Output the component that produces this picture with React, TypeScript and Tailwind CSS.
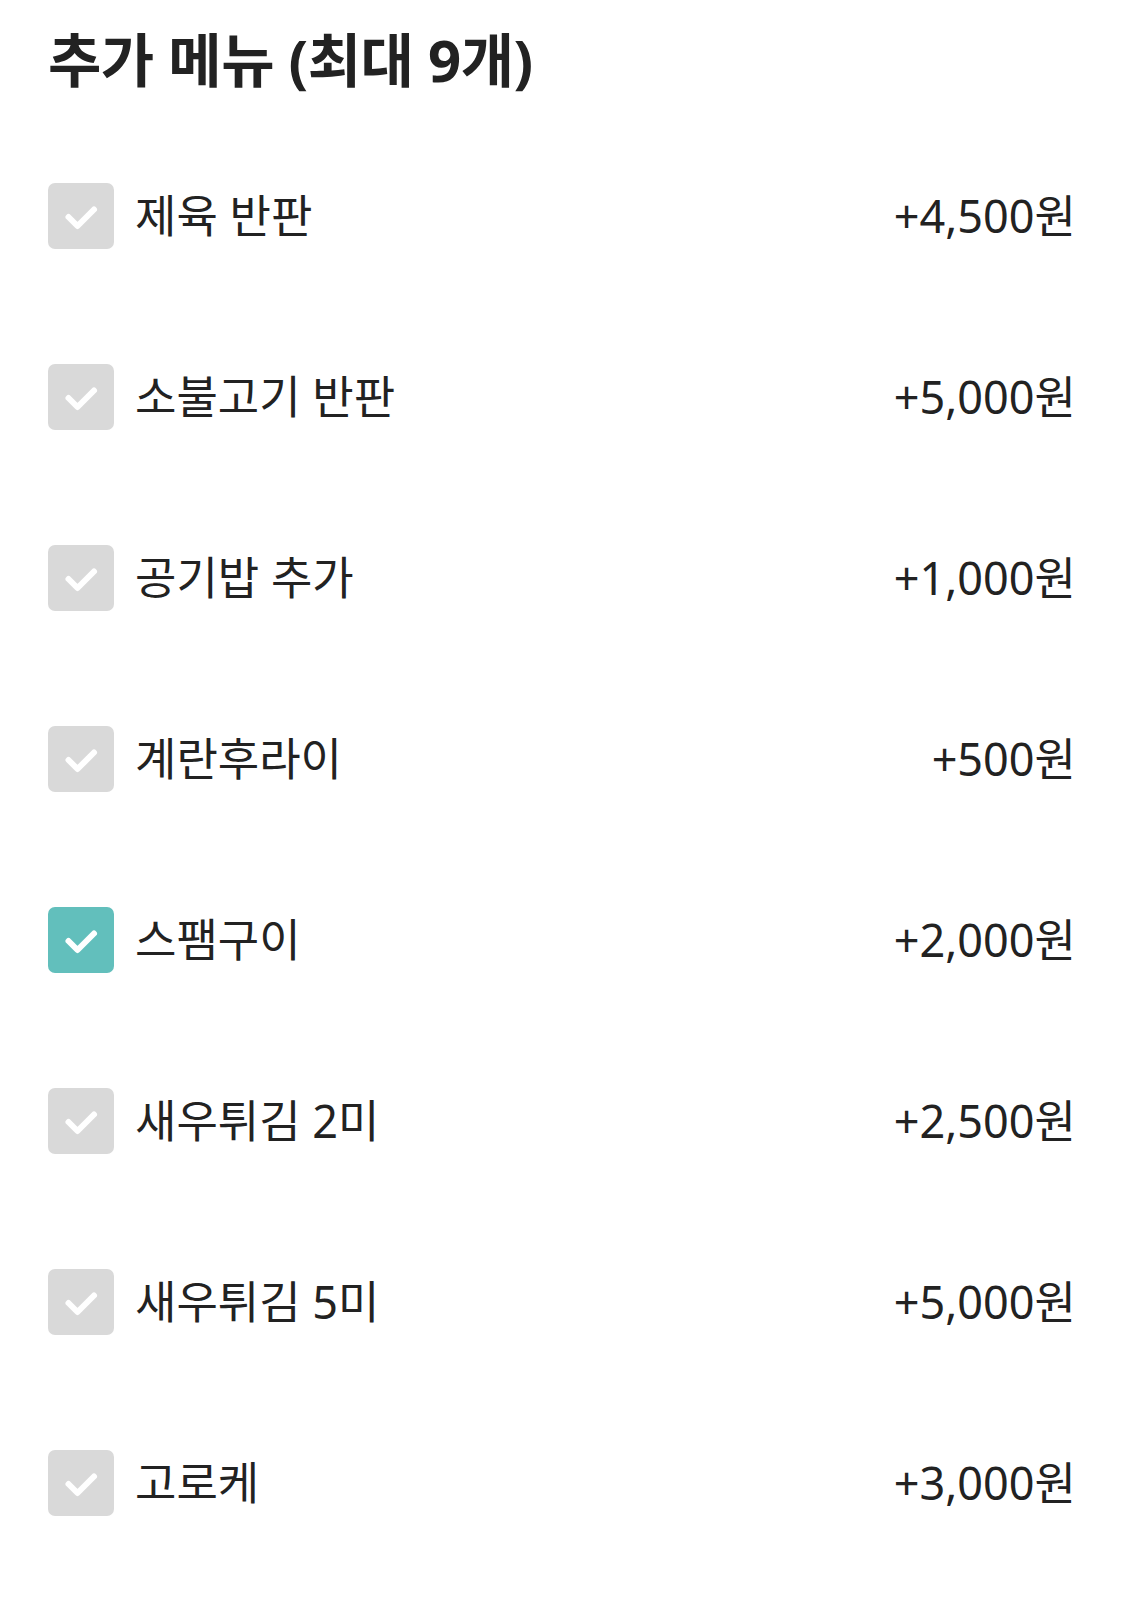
import React from "react";

const items = [
  { name: "제육 반판", price: "+4,500원", checked: false },
  { name: "소불고기 반판", price: "+5,000원", checked: false },
  { name: "공기밥 추가", price: "+1,000원", checked: false },
  { name: "계란후라이", price: "+500원", checked: false },
  { name: "스팸구이", price: "+2,000원", checked: true },
  { name: "새우튀김 2미", price: "+2,500원", checked: false },
  { name: "새우튀김 5미", price: "+5,000원", checked: false },
  { name: "고로케", price: "+3,000원", checked: false },
];

function Check({ checked }: { checked: boolean }) {
  return (
    <div
      className={
        "flex h-[66px] w-[66px] shrink-0 items-center justify-center rounded-[7px] " +
        (checked ? "bg-[#62bfbc]" : "bg-[#d9d9d9]")
      }
    >
      <svg width="66" height="66" viewBox="0 0 66 66" fill="none">
        <path
          d="M20.5 34 L29.5 43 L46 26.5"
          stroke="#ffffff"
          strokeWidth="6"
          strokeLinecap="round"
          strokeLinejoin="round"
        />
      </svg>
    </div>
  );
}

export default function App() {
  return (
    <div
      className="min-h-[1615px] bg-white px-[48px] text-[#222222]"
      style={{ fontFamily: '"Noto Sans", "Noto Sans CJK KR", sans-serif' }}
    >
      <h1 className="pt-[15px] text-[58px] font-bold leading-[90px] tracking-[-0.5px]">
        추가 메뉴 (최대 9개)
      </h1>
      <ul className="mt-[20px]">
        {items.map((it) => (
          <li key={it.name} className="flex h-[181px] items-center justify-between">
            <div className="flex items-center gap-[21px]">
              <Check checked={it.checked} />
              <span className="text-[45px] leading-none">{it.name}</span>
            </div>
            <span className="pr-[1px] text-[45px] leading-none">{it.price}</span>
          </li>
        ))}
      </ul>
    </div>
  );
}
